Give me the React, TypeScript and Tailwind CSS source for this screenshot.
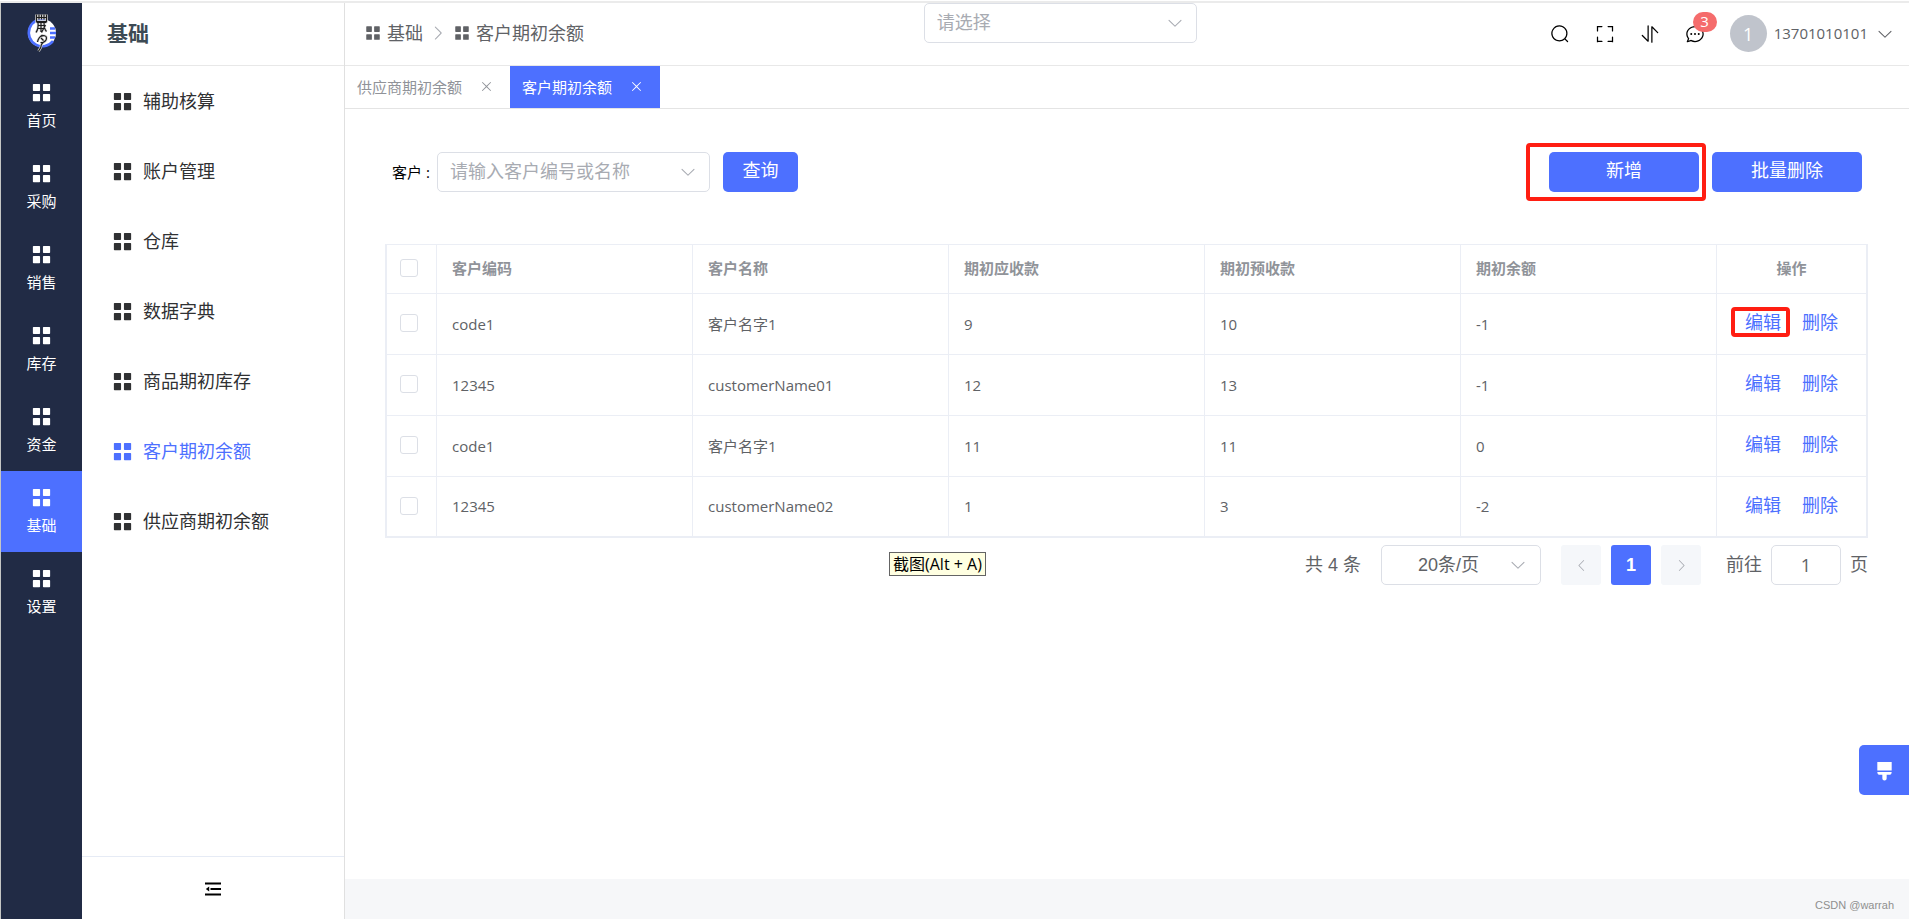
import React from "react";

type IconProps = { className?: string; d: string };

const PATHS = {
  menu: "M160 448a32 32 0 0 1-32-32V160a32 32 0 0 1 32-32h256a32 32 0 0 1 32 32v256a32 32 0 0 1-32 32zM608 448a32 32 0 0 1-32-32V160a32 32 0 0 1 32-32h256a32 32 0 0 1 32 32v256a32 32 0 0 1-32 32zM160 896a32 32 0 0 1-32-32V608a32 32 0 0 1 32-32h256a32 32 0 0 1 32 32v256a32 32 0 0 1-32 32zM608 896a32 32 0 0 1-32-32V608a32 32 0 0 1 32-32h256a32 32 0 0 1 32 32v256a32 32 0 0 1-32 32z",
  search:
    "m795.904 750.72 124.992 124.928a32 32 0 0 1-45.248 45.248L750.656 795.904a416 416 0 1 1 45.248-45.248zM480 832a352 352 0 1 0 0-704 352 352 0 0 0 0 704",
  fullscreen:
    "m160 96.064 192 .192a32 32 0 0 1 0 64l-192-.192V352a32 32 0 0 1-64 0V96h64zm0 831.872V928H96V672a32 32 0 1 1 64 0v191.936l192-.192a32 32 0 1 1 0 64zM864 96.064V96h64v256a32 32 0 1 1-64 0V160.064l-192 .192a32 32 0 1 1 0-64zm0 831.872-192-.192a32 32 0 0 1 0-64l192 .192V672a32 32 0 1 1 64 0v256h-64z",
  sort: "M384 96a32 32 0 0 1 64 0v786.752a32 32 0 0 1-54.592 22.656L95.936 608a32 32 0 0 1 0-45.312h.128a32 32 0 0 1 45.184 0L384 805.632zm192 45.248a32 32 0 0 1 54.592-22.592L928.064 416a32 32 0 0 1 0 45.312h-.128a32 32 0 0 1-45.184 0L640 218.496V928a32 32 0 1 1-64 0z",
  chat: "m174.72 855.68 135.296-45.12 23.68 11.84C388.096 849.536 448.576 864 512 864c211.84 0 384-166.784 384-352S723.84 160 512 160 128 326.784 128 512c0 69.12 24.96 139.264 70.848 199.232l22.08 28.8-46.272 115.584zm-45.248 82.56A32 32 0 0 1 89.6 896l58.368-145.92C94.72 680.32 64 596.864 64 512 64 299.904 256 96 512 96s448 203.904 448 416-192 416-448 416a461.056 461.056 0 0 1-206.912-48.384zM512 563.2a51.2 51.2 0 1 1 0-102.4 51.2 51.2 0 0 1 0 102.4m192 0a51.2 51.2 0 1 1 0-102.4 51.2 51.2 0 0 1 0 102.4m-384 0a51.2 51.2 0 1 1 0-102.4 51.2 51.2 0 0 1 0 102.4",
  down: "M831.872 340.864 512 652.672 192.128 340.864a30.592 30.592 0 0 0-42.752 0 29.12 29.12 0 0 0 0 41.6L489.664 714.24a32 32 0 0 0 44.672 0l340.288-331.712a29.12 29.12 0 0 0 0-41.728 30.592 30.592 0 0 0-42.752 0z",
  right:
    "M340.864 149.312a30.592 30.592 0 0 0 0 42.752L652.736 512 340.864 832.192a30.592 30.592 0 0 0 0 42.752 29.12 29.12 0 0 0 41.728 0L714.24 534.336a32 32 0 0 0 0-44.672L382.592 149.376a29.12 29.12 0 0 0-41.728 0z",
  left: "M683.136 149.312a30.592 30.592 0 0 1 0 42.752L371.264 512l311.872 320.192a30.592 30.592 0 0 1 0 42.752 29.12 29.12 0 0 1-41.728 0L309.76 534.336a32 32 0 0 1 0-44.672l331.648-340.288a29.12 29.12 0 0 1 41.728 0z",
  close:
    "M764.288 214.592 512 466.88 259.712 214.592a31.936 31.936 0 0 0-45.12 45.12L466.752 512 214.528 764.224a31.936 31.936 0 1 0 45.12 45.184L512 557.184l252.288 252.288a31.936 31.936 0 0 0 45.12-45.12L557.12 512.064l252.288-252.352a31.936 31.936 0 1 0-45.12-45.184z",
  brush:
    "M608 704v160a96 96 0 0 1-192 0V704h-96a128 128 0 0 1-128-128h640a128 128 0 0 1-128 128zM192 512V128.064h640V512z",
};

const SEAL =
  "M10.500 1.500v7h10v-7M13 1.500v5M15.500 1.500v5M18 1.500v5M10.500 4.500h10M10.500 9.500h10M12 9.500c.5 4 0 7-2 10M15 10v9M18 9.500c0 4 .5 7 2.500 9M12.500 12.500h6M12 15.500h6.500M19.500 12l-4 7.500M16.500 22c-2.500 1.500-4.500 4-5 7M14.500 23.500c3-1.500 6-1 6 1.500 0 3-2.500 5-6 4.500M15 25l2.500 2.500M19 28c-3 2-4 4-4 5.500s-1.500 3-2.500 4.500";

function Icon({ d, className }: IconProps) {
  return (
    <svg viewBox="0 0 1024 1024" fill="currentColor" aria-hidden="true" className={`shrink-0 ${className ?? ""}`}>
      <path d={d} />
    </svg>
  );
}

function Logo() {
  return (
    <svg viewBox="0 0 32 40" className="h-10 w-8" fill="none" aria-label="logo">
      <circle cx="16" cy="20" r="14" fill="#fff" />
      <path d="M19 6.500A13.500 13.500 0 1 0 27 28" stroke="#4c6fff" strokeWidth="2.600" />
      <path d="M24 15.500h5M24 20h6M24 24.500h5" stroke="#4c6fff" strokeWidth="2.600" />
      <path d={SEAL} stroke="#d8d8d8" strokeWidth="2.600" />
      <path d={SEAL} stroke="#1c1c1c" strokeWidth="1.200" />
    </svg>
  );
}

const MODULES = ["首页", "采购", "销售", "库存", "资金", "基础", "设置"];
const MENU = ["辅助核算", "账户管理", "仓库", "数据字典", "商品期初库存", "客户期初余额", "供应商期初余额"];
const COLUMNS = ["客户编码", "客户名称", "期初应收款", "期初预收款", "期初余额"];
const ROWS = [
  ["code1", "客户名字1", "9", "10", "-1"],
  ["12345", "customerName01", "12", "13", "-1"],
  ["code1", "客户名字1", "11", "11", "0"],
  ["12345", "customerName02", "1", "3", "-2"],
];

function ModuleNav() {
  return (
    <nav aria-label="模块" className="w-[81px] shrink-0 bg-[#212b45]">
      <div className="flex h-[63px] items-center justify-center pb-1">
        <Logo />
      </div>
      {MODULES.map((name) => (
        <a
          key={name}
          href="#"
          className={`flex h-[81px] flex-col items-center gap-1.5 pt-[15px] text-[15px] leading-5 text-white ${
            name === "基础" ? "bg-[#4d70ff]" : ""
          }`}
        >
          <Icon d={PATHS.menu} className="size-[23px]" />
          {name}
        </a>
      ))}
    </nav>
  );
}

function SideMenu() {
  return (
    <aside className="flex w-[263px] shrink-0 flex-col border-r border-[#e0e0e0]">
      <h1 className="flex h-[63px] items-center border-b border-[#e8e8e8] pl-[25px] text-[21px] font-bold text-[#3d4a54]">
        基础
      </h1>
      <nav aria-label="基础" className="grow">
        {MENU.map((name) => (
          <a
            key={name}
            href="#"
            className={`flex h-[70px] items-center gap-[9px] pl-[29px] text-lg ${
              name === "客户期初余额" ? "text-[#4d70ff]" : "text-[#303133]"
            }`}
          >
            <Icon d={PATHS.menu} className="size-[23px]" />
            {name}
          </a>
        ))}
      </nav>
      <button aria-label="收起菜单" className="flex h-[63px] items-center justify-center border-t border-[#e6ebf5] pt-0.5">
        <svg viewBox="0 0 16 14" className="h-3.5 w-4" fill="#000" aria-hidden="true">
          <path d="M0 .5h16v2H0zM5.500 6H16v2H5.500zM0 11.500h16v2H0zM.8 7l3.400-2.400v4.800z" />
        </svg>
      </button>
    </aside>
  );
}

function Dropdown({ id, label, placeholder }: { id: string; label?: string; placeholder: string }) {
  return (
    <span className="relative flex w-[273px] shrink-0 items-center">
      <select
        id={id}
        aria-label={label}
        className="h-10 w-full appearance-none rounded-[5px] border border-[#dcdfe6] bg-white pr-10 pb-[3px] pl-3 text-lg text-[#a8abb2]"
      >
        <option>{placeholder}</option>
      </select>
      <Icon d={PATHS.down} className="pointer-events-none absolute right-[13px] size-[18px] text-[#a8abb2]" />
    </span>
  );
}

function Header() {
  return (
    <header className="flex h-[63px] border-b border-[#e8e8e8]">
      <nav aria-label="面包屑" className="flex w-[37%] items-center pb-0.5 pl-[19px] text-lg text-[#606266]">
        <a href="#" className="flex items-center gap-[5px]">
          <Icon d={PATHS.menu} className="size-[18px]" />
          基础
        </a>
        <Icon d={PATHS.right} className="mx-1.5 size-[18px] text-[#a8abb2]" />
        <a href="#" className="flex items-center gap-[5px]">
          <Icon d={PATHS.menu} className="size-[18px]" />
          客户期初余额
        </a>
      </nav>
      <div className="self-start">
        <Dropdown id="global" label="全局选择" placeholder="请选择" />
      </div>
      <div className="ml-auto flex items-center gap-[25px] pr-[15px] pb-px text-black">
        <button aria-label="搜索">
          <Icon d={PATHS.search} className="size-5" />
        </button>
        <button aria-label="全屏">
          <Icon d={PATHS.fullscreen} className="size-5" />
        </button>
        <button aria-label="排序">
          <Icon d={PATHS.sort} className="size-5" />
        </button>
        <button aria-label="消息" className="relative">
          <Icon d={PATHS.chat} className="size-5" />
          <span className="absolute -top-3 left-2 flex h-5 w-6 items-center justify-center rounded-full bg-[#f56c6c] text-[15px] text-white">
            3
          </span>
        </button>
        <button className="flex items-center text-[15px] text-[#606266]">
          <span className="flex size-[37px] items-center justify-center rounded-full bg-[#c0c4cc] text-lg text-white">
            1
          </span>
          <span className="pr-2 pl-[7px]">13701010101</span>
          <Icon d={PATHS.down} className="size-[18px]" />
        </button>
      </div>
    </header>
  );
}

function Tab({ name, active = false }: { name: string; active?: boolean }) {
  return (
    <div
      className={`flex items-center gap-[17px] pr-4 pl-3 text-[15px] ${
        active ? "bg-[#4d70ff] text-white" : "text-[#909399]"
      }`}
    >
      <a href="#">{name}</a>
      <button aria-label={`关闭${name}`} className="pb-0.5">
        <Icon d={PATHS.close} className="size-[15px]" />
      </button>
    </div>
  );
}

function Filters() {
  return (
    <form className="flex items-center pr-[6px] pl-[7px]" onSubmit={(e) => e.preventDefault()}>
      <label htmlFor="customer" className="w-[45px] text-[15px] text-black">
        客户 :
      </label>
      <Dropdown id="customer" placeholder="请输入客户编号或名称" />
      <button className="ml-[13px] h-10 w-[75px] rounded-[5px] bg-[#4d70ff] pb-1 text-lg text-white">查询</button>
      <div className="ml-auto flex gap-[13px]">
        <span className="relative">
          <button type="button" className="h-10 w-[150px] rounded-[5px] bg-[#4d70ff] pb-1 text-lg text-white">
            新增
          </button>
          <span className="pointer-events-none absolute -inset-y-[9px] -right-[7px] -left-[23px] rounded-[4px] border-4 border-[#ff1e12]" />
        </span>
        <button type="button" className="h-10 w-[150px] rounded-[5px] bg-[#4d70ff] pb-1 text-lg text-white">
          批量删除
        </button>
      </div>
    </form>
  );
}

function Check({ label }: { label: string }) {
  return (
    <input
      type="checkbox"
      aria-label={label}
      className="block size-[18px] appearance-none rounded-[3px] border border-[#dcdfe6] bg-white"
    />
  );
}

function Balances() {
  return (
    <table className="mt-[52px] w-full table-fixed border-separate border-spacing-0 border-x-2 border-t border-[#ebeef5] text-left text-[15px] text-[#606266]">
      <colgroup>
        <col className="w-[50px]" />
        {COLUMNS.map((c) => (
          <col key={c} />
        ))}
        <col className="w-[149px]" />
      </colgroup>
      <thead>
        <tr className="text-[#909399]">
          <th className="h-[49px] border-r border-b border-[#ebeef5] pb-0.5 pl-[13px]">
            <Check label="全选" />
          </th>
          {COLUMNS.map((c) => (
            <th key={c} className="border-r border-b border-[#ebeef5] px-[15px] pb-0.5 font-bold">
              {c}
            </th>
          ))}
          <th className="border-b border-[#ebeef5] pb-0.5 text-center font-bold">操作</th>
        </tr>
      </thead>
      <tbody>
        {ROWS.map((row, r) => {
          const edge = r === ROWS.length - 1 ? "border-b-2" : "border-b";
          return (
            <tr key={r}>
              <td className={`h-[61px] border-r border-[#ebeef5] pb-0.5 pl-[13px] ${edge}`}>
                <Check label={`选择第${r + 1}行`} />
              </td>
              {row.map((cell, c) => (
                <td key={c} className={`border-r border-[#ebeef5] px-[15px] ${edge}`}>
                  {cell}
                </td>
              ))}
              <td className={`border-[#ebeef5] pb-1 ${edge}`}>
                <div className="flex justify-center gap-[21px] text-lg text-[#4d70ff]">
                  <span className="relative">
                    <a href="#">编辑</a>
                    {r === 0 && (
                      <span className="pointer-events-none absolute -top-px -right-[9px] -bottom-px -left-[14px] rounded-[4px] border-4 border-[#ff1e12]" />
                    )}
                  </span>
                  <a href="#">删除</a>
                </div>
              </td>
            </tr>
          );
        })}
      </tbody>
    </table>
  );
}

function Pagination() {
  return (
    <div className="mt-[7px] flex items-center justify-end font-['Liberation_Sans','Noto_Sans_CJK_SC',sans-serif] text-lg text-[#606266]">
      <span className="mr-5">共 4 条</span>
      <span className="relative flex items-center">
        <select
          aria-label="每页条数"
          className="h-10 w-40 appearance-none rounded-[5px] border border-[#dcdfe6] bg-white pl-9"
        >
          <option>20条/页</option>
        </select>
        <Icon d={PATHS.down} className="pointer-events-none absolute right-3.5 size-[18px] text-[#a8abb2]" />
      </span>
      <div className="ml-5 flex gap-2.5">
        <button aria-label="上一页" className="flex size-10 items-center justify-center rounded-[3px] bg-[#f5f7fa] text-[#a8abb2]">
          <Icon d={PATHS.left} className="size-[15px]" />
        </button>
        <button className="size-10 rounded-[3px] bg-[#4d70ff] font-bold text-white">1</button>
        <button aria-label="下一页" className="flex size-10 items-center justify-center rounded-[3px] bg-[#f5f7fa] text-[#a8abb2]">
          <Icon d={PATHS.right} className="size-[15px]" />
        </button>
      </div>
      <label className="ml-[25px] flex items-center gap-[9px]">
        前往
        <input
          defaultValue="1"
          className="h-10 w-[70px] rounded-[5px] border border-[#dcdfe6] bg-white text-center font-['Open_Sans',sans-serif]"
        />
        页
      </label>
    </div>
  );
}

export default function App() {
  return (
    <div className="flex min-h-screen flex-col bg-white pt-px font-['Open_Sans','Noto_Sans_CJK_SC',sans-serif]">
      <div className="h-0.5 bg-[#ebebeb]" />
      <div className="flex grow border-l border-[#c4c6c4]">
        <ModuleNav />
        <SideMenu />
        <div className="flex min-w-0 grow flex-col">
          <Header />
          <div className="flex h-[43px] border-b border-[#e4e4e4]">
            <Tab name="供应商期初余额" />
            <Tab name="客户期初余额" active />
          </div>
          <main className="relative grow pt-[43px] pr-[41px] pl-10">
            <Filters />
            <Balances />
            <Pagination />
            <div
              role="tooltip"
              className="absolute top-[443px] left-[544px] flex h-6 items-center border border-[#646464] bg-[#ffffe1] px-[3px] text-base whitespace-nowrap text-black"
            >
              截图(Alt + A)
            </div>
          </main>
          <footer className="flex h-10 items-center justify-end bg-[#f6f7f9] pt-3 pr-[15px] font-['Liberation_Sans',sans-serif] text-[11px] text-[#8f8f8f]">
            CSDN @warrah
          </footer>
        </div>
      </div>
      <button
        aria-label="主题设置"
        className="fixed top-[745px] right-0 flex size-[50px] items-center justify-center rounded-l-[5px] bg-[#4d70ff] text-white"
      >
        <Icon d={PATHS.brush} className="size-[23px]" />
      </button>
    </div>
  );
}
